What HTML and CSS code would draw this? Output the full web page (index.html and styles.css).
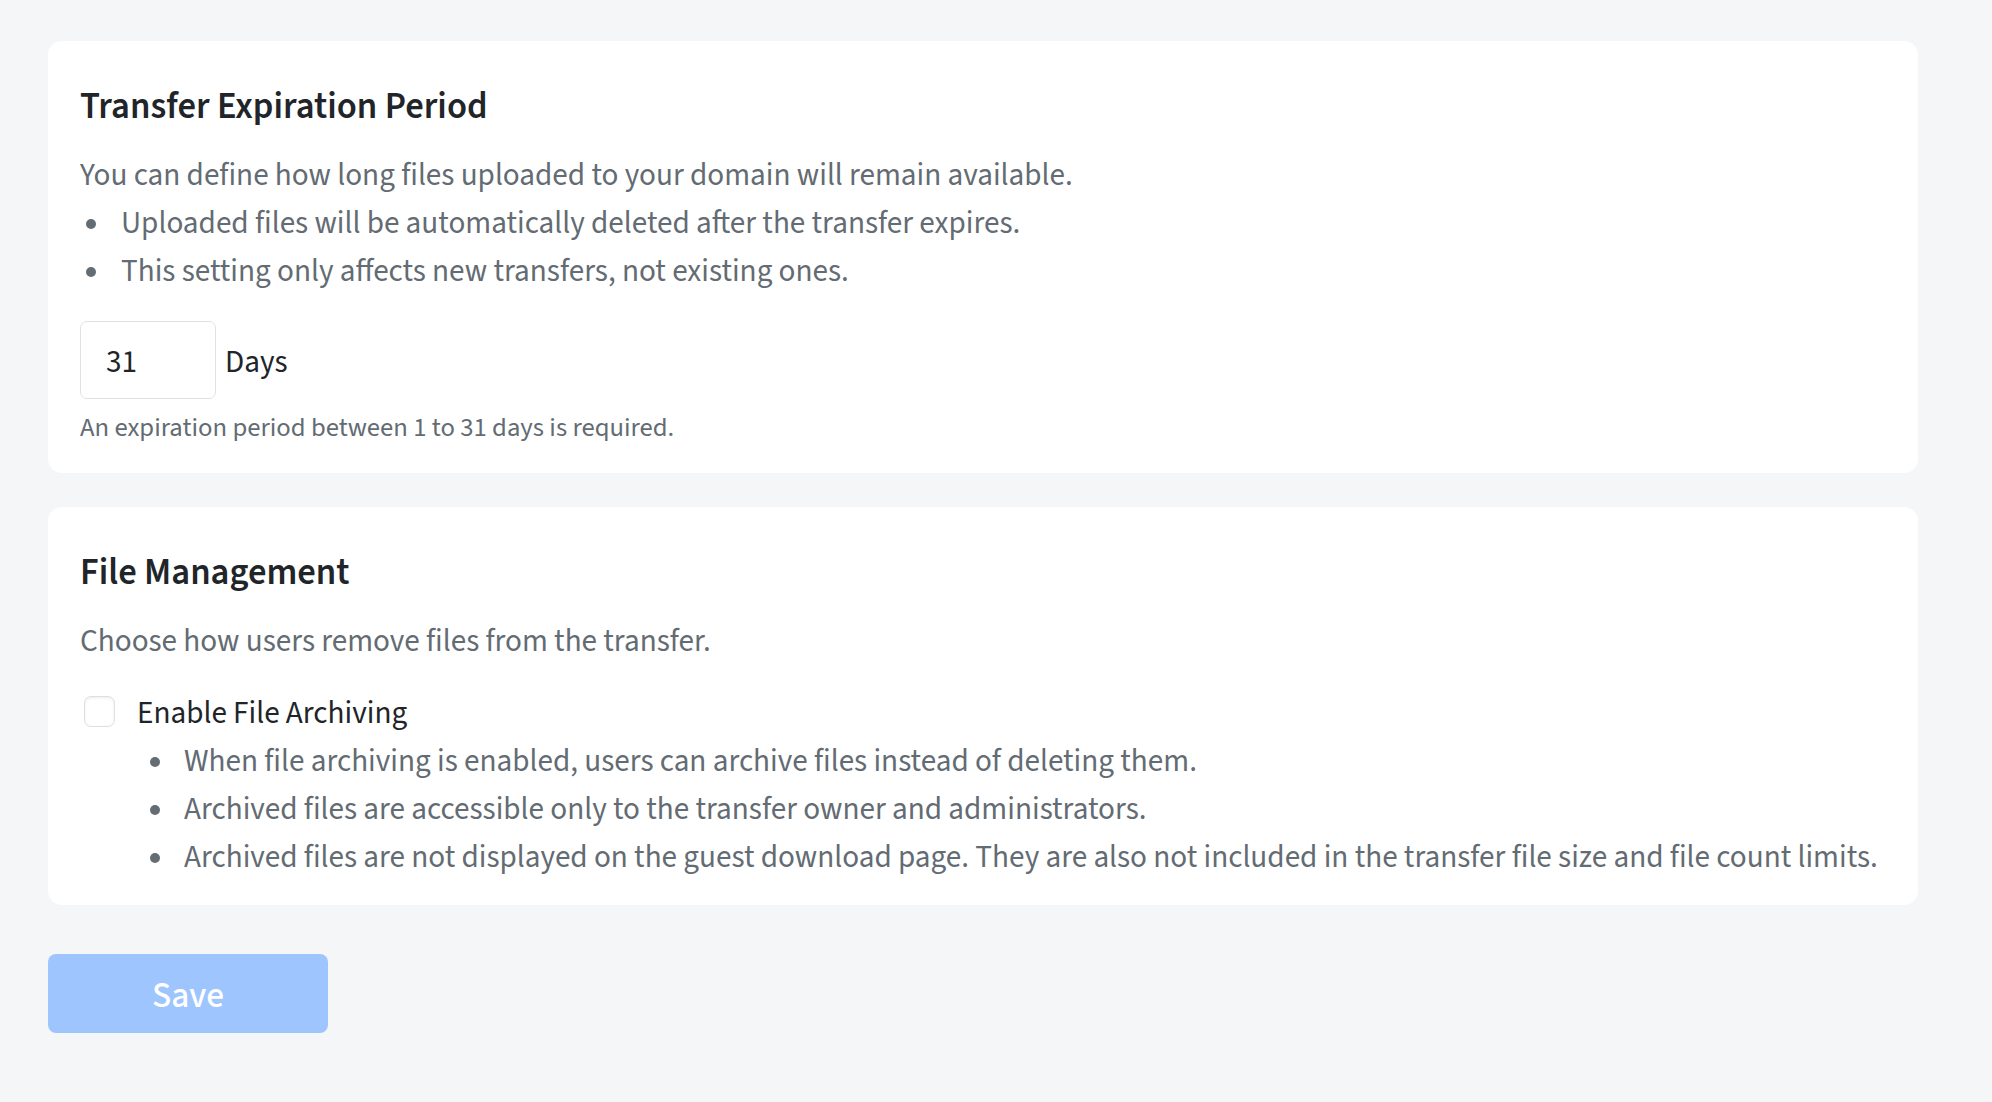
FILE: index.html
```html
<!DOCTYPE html>
<html lang="en">
<head>
<meta charset="utf-8">
<title>Transfer Settings</title>
<link rel="stylesheet" href="styles.css">
</head>
<body>
<main class="page">
  <section class="card card-expiration">
    <h2 class="card-title">Transfer Expiration Period</h2>
    <p class="card-text">You can define how long files uploaded to your domain will remain available.</p>
    <ul class="bullets">
      <li>Uploaded files will be automatically deleted after the transfer expires.</li>
      <li>This setting only affects new transfers, not existing ones.</li>
    </ul>
    <div class="days-row">
      <input class="days-input" type="text" value="31">
      <span class="days-label">Days</span>
    </div>
    <p class="helper">An expiration period between 1 to 31 days is required.</p>
  </section>

  <section class="card card-files">
    <h2 class="card-title">File Management</h2>
    <p class="card-text">Choose how users remove files from the transfer.</p>
    <label class="check-row">
      <span class="checkbox"></span>
      <span class="check-label">Enable File Archiving</span>
    </label>
    <ul class="bullets sub-bullets">
      <li>When file archiving is enabled, users can archive files instead of deleting them.</li>
      <li>Archived files are accessible only to the transfer owner and administrators.</li>
      <li>Archived files are not displayed on the guest download page. They are also not included in the transfer file size and file count limits.</li>
    </ul>
  </section>

  <button class="save-btn" type="button">Save</button>
</main>
</body>
</html>
```
FILE: styles.css
```css
html, body {
  margin: 0;
  padding: 0;
  background: #f5f6f8;
}

body {
  font-family: "Source Sans 3", "Source Sans Pro", "Lato", sans-serif;
  color: #636b73;
}

.page {
  padding: 41px 74px 40px 48px;
  display: flex;
  flex-direction: column;
  align-items: flex-start;
}

.card {
  align-self: stretch;
  background: #ffffff;
  border-radius: 14px;
  padding: 44px 32px 25px 32px;
}

.card-files {
  margin-top: 34px;
  padding-bottom: 24px;
}

.card-title {
  margin: 0 0 22px 0;
  font-size: 36.6px;
  line-height: 44px;
  font-weight: 600;
  color: #212529;
}

.card-text {
  margin: 0;
  font-size: 31.2px;
  line-height: 48px;
}

.bullets {
  margin: 0;
  padding: 0;
  list-style: none;
  font-size: 31.2px;
  line-height: 48px;
}

.bullets li::before {
  content: "";
  display: inline-block;
  width: 10px;
  height: 10px;
  border-radius: 50%;
  background: #646c74;
  vertical-align: middle;
  margin-left: 6px;
  margin-right: 25px;
  position: relative;
  top: -1px;
}

.sub-bullets li::before {
  margin-left: 70px;
  margin-right: 24px;
}

.days-row {
  margin-top: 26px;
  display: flex;
  align-items: center;
  gap: 9px;
}

.days-input {
  box-sizing: border-box;
  width: 136px;
  height: 78px;
  border: 1.5px solid #dfe1e4;
  border-radius: 7px;
  padding: 4px 24px 0 25px;
  font-family: "Source Sans 3", "Source Sans Pro", sans-serif;
  font-size: 31.2px;
  color: #212529;
  background: #ffffff;
  outline: none;
}

.days-label {
  font-size: 31.2px;
  line-height: 48px;
  color: #212529;
  padding-top: 4px;
}

.helper {
  margin: 9px 0 0 0;
  font-size: 26.7px;
  line-height: 40px;
}

.check-row {
  margin-top: 24px;
  display: flex;
  align-items: center;
  gap: 22px;
  padding-left: 4px;
}

.checkbox {
  box-sizing: border-box;
  width: 31px;
  height: 31px;
  border: 1.5px solid #dedfe1;
  border-radius: 7px;
  background: #ffffff;
  box-shadow: inset 0 1px 3px rgba(0, 0, 0, 0.08);
  margin-bottom: 4px;
}

.check-label {
  font-size: 31.2px;
  line-height: 48px;
  color: #212529;
}

.save-btn {
  margin-top: 49px;
  width: 280px;
  height: 79px;
  border: none;
  border-radius: 8px;
  background: #9ec5fe;
  color: #ffffff;
  font-family: "Source Sans 3", "Source Sans Pro", sans-serif;
  font-size: 35.5px;
  font-weight: 500;
  padding: 4px 0 0 0;
  cursor: default;
}
```
